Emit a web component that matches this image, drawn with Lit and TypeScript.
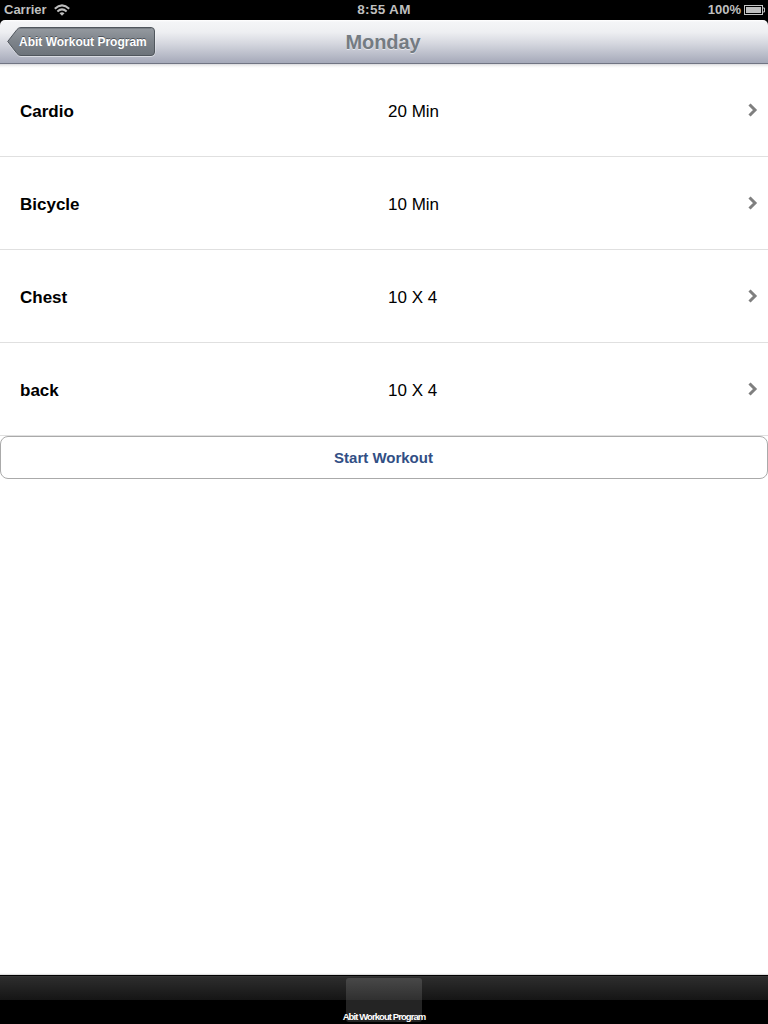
import { LitElement, html, css, svg } from "lit";
import { customElement, state } from "lit/decorators.js";

interface Exercise {
  name: string;
  amount: string;
}

@customElement("app-root")
export class AppRoot extends LitElement {
  @state() private exercises: Exercise[] = [
    { name: "Cardio", amount: "20 Min" },
    { name: "Bicycle", amount: "10 Min" },
    { name: "Chest", amount: "10 X 4" },
    { name: "back", amount: "10 X 4" },
  ];

  static styles = css`
    :host {
      display: flex;
      flex-direction: column;
      width: 100%;
      height: 100vh;
      overflow: hidden;
      background: #fff;
      font-family: "Liberation Sans", Arial, sans-serif;
      color: #000;
    }
    * {
      box-sizing: border-box;
    }
    svg {
      display: block;
    }
    .status {
      flex: none;
      height: 20px;
      background: #000;
      color: #bfbfbf;
      display: grid;
      grid-template-columns: 1fr auto 1fr;
      align-items: center;
      font-size: 13px;
      font-weight: bold;
      line-height: 20px;
      padding: 0 3px 0 4px;
    }
    .left,
    .right {
      display: flex;
      align-items: center;
      height: 20px;
    }
    .left {
      gap: 7px;
    }
    .right {
      justify-content: flex-end;
      gap: 3px;
    }
    .time {
      font-size: 13.5px;
      letter-spacing: 0.3px;
      line-height: 19px;
      height: 20px;
      padding-right: 1px;
    }
    .nav-wrap {
      flex: none;
      height: 44px;
      background: #000;
    }
    .nav {
      height: 44px;
      border-radius: 5px 5px 0 0;
      border-bottom: 1px solid #717583;
      background: linear-gradient(#fff 0, #f4f5f7 2px, #eeeff2 12px, #d4d6de 24px, #a5a9b9 43px);
      display: grid;
      grid-template-columns: 1fr auto 1fr;
      align-items: center;
      padding: 0 9px 0 7px;
    }
    .back {
      display: grid;
      width: 149px;
      height: 30px;
      border: 0;
      padding: 0;
      background: none;
      font: inherit;
    }
    .back > * {
      grid-area: 1 / 1;
    }
    .back span {
      color: #fff;
      font-size: 12px;
      font-weight: bold;
      line-height: 30px;
      text-align: left;
      padding-left: 12px;
      white-space: nowrap;
      text-shadow: 0 -1px 0 rgba(40, 45, 52, 0.6);
    }
    .title {
      font-size: 20px;
      font-weight: bold;
      letter-spacing: -0.1px;
      line-height: 44px;
      height: 43px;
      color: #747b82;
      text-shadow: 0 1px 0 rgba(255, 255, 255, 0.55);
    }
    .list {
      flex: 1;
      background: linear-gradient(#d9d9dc 0, #f4f4f4 2px, #fff 4px);
    }
    .row {
      display: grid;
      grid-template-columns: 388px 1fr 10px;
      height: 93px;
      align-items: center;
      padding: 4px 10px 0 0;
      border-bottom: 1px solid #e0e0e0;
      font-size: 17px;
      line-height: 20px;
    }
    .name {
      font-weight: bold;
      padding-left: 20px;
    }
    .row svg {
      margin-top: -5px;
    }
    .start {
      display: block;
      width: 100%;
      height: 43px;
      border: 1px solid #aaa;
      border-radius: 8px;
      background: #fff;
      font: bold 15px/41px "Liberation Sans", Arial, sans-serif;
      color: #324f85;
      padding: 0 1px 0 0;
    }
    .tabs {
      flex: none;
      height: 49px;
      border-top: 1px solid #000;
      background: linear-gradient(#3b3b3b 0, #2d2d2d 1px, #151515 24px, #000 24px);
      box-shadow: 0 -1px 1px #ddd;
      display: flex;
      justify-content: center;
      padding-top: 2px;
    }
    .tab {
      width: 76px;
      height: 44px;
      border-radius: 3px;
      background: linear-gradient(#484848, #303030 22px, #242424 22px, #242424);
      display: flex;
      justify-content: center;
      align-items: flex-end;
      color: #fff;
      font-size: 9.5px;
      font-weight: bold;
      letter-spacing: -0.92px;
      line-height: 10px;
      white-space: nowrap;
    }
  `;

  private wifi() {
    return svg`<svg width="16" height="12" viewBox="0 0 16 12" fill="none" stroke="#bfbfbf" stroke-width="2">
      <path d="M.8 4.7Q8-2 15.2 4.7" /><path d="M3.4 7.5Q8 3.3 12.6 7.5" />
      <path d="M5.5 9.2Q8 7.2 10.5 9.2L8 11.8Z" fill="#bfbfbf" stroke="none" /></svg>`;
  }

  private battery() {
    return svg`<svg width="21" height="10" viewBox="0 0 21 10">
      <rect x=".5" y=".5" width="18" height="9" fill="none" stroke="#c4c4c4" />
      <rect x="2" y="2" width="15" height="6" fill="#bfbfbf" />
      <path d="M19 3h1.5v4H19" fill="none" stroke="#c4c4c4" /></svg>`;
  }

  render() {
    return html`
      <div class="status">
        <div class="left"><span class="carrier">Carrier</span>${this.wifi()}</div>
        <div class="time">8:55 AM</div>
        <div class="right"><span class="percent">100%</span>${this.battery()}</div>
      </div>
      <div class="nav-wrap">
        <div class="nav">
          <button class="back">
            <svg width="149" height="30" viewBox="0 0 149 30">
              <defs>
                <linearGradient id="steel" x1="0" y1="0" x2="0" y2="1">
                  <stop offset="0" stop-color="#969ba1" />
                  <stop offset=".5" stop-color="#7d838a" />
                  <stop offset="1" stop-color="#6d737a" />
                </linearGradient>
              </defs>
              <path d="M14 1.5H144Q148 1.5 148 5.5V25.5Q148 29.5 144 29.5H14Q11.5 29.5 10 27.5L.7 15.5L10 3.5Q11.5 1.5 14 1.5Z" fill="none" stroke="#fff" stroke-opacity=".5" />
              <path d="M14 .5H144Q147.5 .5 147.5 4V25Q147.5 28.5 144 28.5H14Q11.5 28.5 10 26.5L.7 14.5L10 2.5Q11.5 .5 14 .5Z" fill="url(#steel)" stroke="#50565d" />
              <path d="M13 1.5H144" stroke="#696f76" stroke-opacity=".6" />
            </svg>
            <span>Abit Workout Program</span>
          </button>
          <div class="title">Monday</div>
        </div>
      </div>
      <div class="list">
        ${this.exercises.map(
          (e) => html`<div class="row">
            <span class="name">${e.name}</span><span class="amount">${e.amount}</span>
            <svg width="10" height="14" viewBox="0 0 10 14" fill="none" stroke="#7f7f7f" stroke-width="3">
              <path d="M1.5 1.5L7 7L1.5 12.5" />
            </svg>
          </div>`
        )}
        <button class="start">Start Workout</button>
      </div>
      <div class="tabs"><div class="tab"><span>Abit Workout Program</span></div></div>
    `;
  }
}
